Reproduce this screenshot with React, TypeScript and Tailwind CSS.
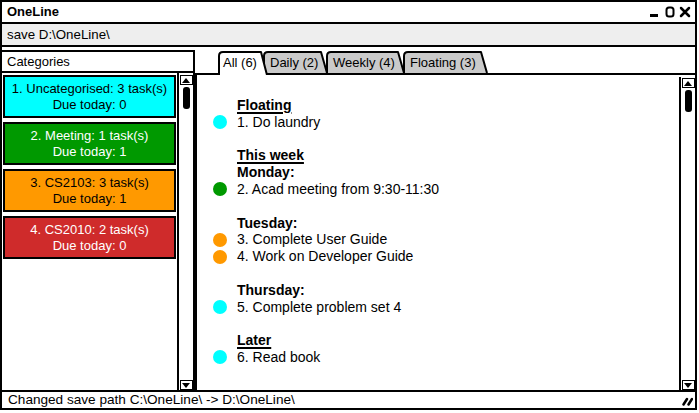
import clsx from "clsx";

type Line = { kind: "head" | "day" | "item" | "gap"; text?: string; dot?: string };

const lines: Line[] = [
  { kind: "head", text: "Floating" },
  { kind: "item", text: "1. Do laundry", dot: "bg-[#00ffff]" },
  { kind: "gap" },
  { kind: "head", text: "This week" },
  { kind: "day", text: "Monday:" },
  { kind: "item", text: "2. Acad meeting from 9:30-11:30", dot: "bg-[#009900]" },
  { kind: "gap" },
  { kind: "day", text: "Tuesday:" },
  { kind: "item", text: "3. Complete User Guide", dot: "bg-[#ff9900]" },
  { kind: "item", text: "4. Work on Developer Guide", dot: "bg-[#ff9900]" },
  { kind: "gap" },
  { kind: "day", text: "Thursday:" },
  { kind: "item", text: "5. Complete problem set 4", dot: "bg-[#00ffff]" },
  { kind: "gap" },
  { kind: "head", text: "Later" },
  { kind: "item", text: "6. Read book", dot: "bg-[#00ffff]" },
];

const categories = [
  { title: "1. Uncategorised: 3 task(s)", due: "Due today: 0", cls: "bg-[#00ffff] text-black" },
  { title: "2. Meeting: 1 task(s)", due: "Due today: 1", cls: "bg-[#009900] text-white" },
  { title: "3. CS2103: 3 task(s)", due: "Due today: 1", cls: "bg-[#ff9900] text-black" },
  { title: "4. CS2010: 2 task(s)", due: "Due today: 0", cls: "bg-[#cf2b2b] text-white" },
];

// Balsamiq-ish scrollbar: boxed arrows and a rounded black thumb.
function Scrollbar({ className }: { className?: string }) {
  return (
    <div className={clsx("flex w-[16px] flex-col items-center border-l-2 border-black", className)}>
      <div className="flex h-[10px] w-[13px] items-center justify-center border border-black">
        <div className="h-0 w-0 border-x-[4px] border-b-[5px] border-x-transparent border-b-black" />
      </div>
      <div className="mt-[2px] h-[22px] w-[7px] rounded-[3px] bg-black" />
      <div className="flex-1" />
      <div className="flex h-[10px] w-[13px] items-center justify-center border border-black">
        <div className="h-0 w-0 border-x-[4px] border-t-[5px] border-x-transparent border-t-black" />
      </div>
    </div>
  );
}

function Tab({
  label,
  width,
  active,
  fill,
  className,
}: {
  label: string;
  width: number;
  active?: boolean;
  fill: string;
  className: string;
}) {
  const h = active ? 24 : 22;
  return (
    <div className={clsx("relative flex items-start pt-[4px]", className)}>
      <svg className="absolute left-0 top-0" width={width} height={h}>
        <path
          d={`M1 ${h} V5 Q1 1 5 1 H${width - 7} L${width - 1} ${h}`}
          fill={fill}
          stroke="black"
          strokeWidth={2}
          strokeLinejoin="round"
        />
      </svg>
      <span className="relative leading-[16px]">{label}</span>
    </div>
  );
}

export default function App() {
  return (
    <div className="h-[413px] w-[699px] bg-white font-['Liberation_Sans',Arial,sans-serif] text-[13px] text-black">
      <div className="flex h-[410px] w-[697px] flex-col border-2 border-black">
        {/* title bar */}
        <div className="flex h-[22px] items-center justify-between border-b-2 border-black pl-[5px] pr-[4px]">
          <span className="font-bold">OneLine</span>
          <svg width="42" height="12" viewBox="0 0 42 12">
            <rect x="1" y="8" width="8" height="3" fill="black" />
            <rect x="17.5" y="1.5" width="7" height="9" rx="2.5" fill="none" stroke="black" strokeWidth="2" />
            <path d="M32 2 L40 10 M40 2 L32 10" stroke="black" strokeWidth="2.5" strokeLinecap="round" />
          </svg>
        </div>

        {/* save bar */}
        <div className="flex h-[23px] items-center border-b-2 border-black bg-[#eeeeee] pl-[5px] text-[13.3px]">
          save D:\OneLine\
        </div>

        {/* main */}
        <div className="flex min-h-0 flex-1 pt-[3px]">
          <div className="flex w-[193px] flex-col">
            <div className="flex h-[23px] items-center border-y-2 border-r-2 border-black pl-[5px]">Categories</div>
            <div className="flex min-h-0 flex-1 border-r-2 border-black">
              <div className="flex flex-1 flex-col gap-[4px] px-[1px] pt-[2px]">
                {categories.map((c) => (
                  <div
                    key={c.title}
                    className={clsx(
                      "flex h-[43px] flex-col items-center justify-center border-2 border-black leading-[16px]",
                      c.cls,
                    )}
                  >
                    <span>{c.title}</span>
                    <span>{c.due}</span>
                  </div>
                ))}
              </div>
              <Scrollbar className="pt-[2px]" />
            </div>
          </div>

          <div className="flex min-w-0 flex-1 flex-col">
            <div className="relative z-10 flex h-[23px] items-end">
              <Tab label="All (6)" width={50} active fill="white" className="z-40 ml-[23px] mb-[-2px] h-[24px] w-[50px] pl-[5px]" />
              <Tab label="Daily (2)" width={65} fill="#cacaca" className="z-30 ml-[-5px] h-[22px] w-[65px] pl-[7px]" />
              <Tab label="Weekly (4)" width={79} fill="#cacaca" className="z-20 ml-[-2px] h-[22px] w-[79px] pl-[7px]" />
              <Tab label="Floating (3)" width={85} fill="#cacaca" className="z-10 ml-[-2px] h-[22px] w-[85px] pl-[7px]" />
            </div>
            <div className="flex min-h-0 flex-1 border-l-2 border-t-2 border-black">
              <div className="flex-1 pt-[22px] text-[14px]">
                {lines.map((l, i) =>
                  l.kind === "gap" ? (
                    <div key={i} className="h-[16.8px]" />
                  ) : l.kind === "item" ? (
                    <div key={i} className="flex h-[16.8px] items-center pl-[16px]">
                      <span className={clsx("h-[14px] w-[14px] shrink-0 rounded-full", l.dot)} />
                      <span className="ml-[10px] leading-[16.8px]">{l.text}</span>
                    </div>
                  ) : (
                    <div
                      key={i}
                      className={clsx(
                        "h-[16.8px] pl-[40px] font-bold leading-[16.8px]",
                        l.kind === "head" && "underline decoration-[1.5px] underline-offset-2",
                      )}
                    >
                      {l.text}
                    </div>
                  ),
                )}
              </div>
              <Scrollbar className="mt-[2px] pt-[1px]" />
            </div>
          </div>
        </div>

        {/* status bar */}
        <div className="flex h-[18px] items-center justify-between border-t-2 border-black pl-[6px] pr-[2px]">
          <span className="text-[13.6px]">Changed save path C:\OneLine\ -&gt; D:\OneLine\</span>
          <svg width="11" height="11" viewBox="0 0 11 11">
            <path d="M1.5 9.5 L5 4 M6.5 9.5 L10 4" stroke="black" strokeWidth="2.5" strokeLinecap="round" />
          </svg>
        </div>
      </div>
    </div>
  );
}
